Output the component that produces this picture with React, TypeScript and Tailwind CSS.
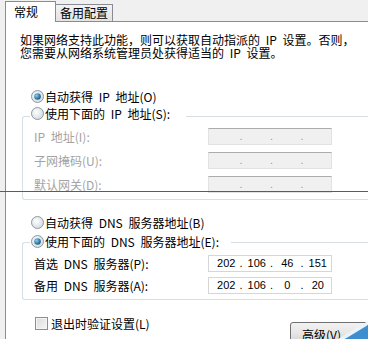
function Radio({ checked, id }: { checked?: boolean; id: string }) {
  return (
    <svg width="13" height="13" viewBox="0 0 13 13" className="shrink-0">
      <defs>
        <radialGradient id={`rf${id}`} cx="0.4" cy="0.4" r="0.7">
          <stop offset="0" stopColor="#ffffff" />
          <stop offset="1" stopColor="#cdd6dd" />
        </radialGradient>
        <radialGradient id={`rd${id}`} cx="0.35" cy="0.35" r="0.75">
          <stop offset="0" stopColor="#7fd0f4" />
          <stop offset="1" stopColor="#0f4b75" />
        </radialGradient>
      </defs>
      <circle cx="6.5" cy="6.5" r="6" fill={`url(#rf${id})`} stroke="#8e99a2" />
      {checked && <circle cx="6.5" cy="6.5" r="3.3" fill={`url(#rd${id})`} />}
    </svg>
  );
}

function IpBox({ values, disabled }: { values: string[]; disabled?: boolean }) {
  return (
    <div
      className={`h-[17px] w-[124px] grid grid-cols-4 border font-['Liberation_Sans',sans-serif] text-[11px] leading-[15px] [word-spacing:0] ${
        disabled ? "bg-[#f0f0f0] border-[#e2e2e2] border-t-[#acacac] text-[#9a9a9a]" : "bg-white border-[#d6d6d6]"
      }`}
    >
      {values.map((v, i) => (
        <div key={i} className="flex items-center">
          <span className="w-[4px]">{i > 0 ? "." : ""}</span>
          <span className="flex-1 text-center">{v}</span>
        </div>
      ))}
    </div>
  );
}

export default function App() {
  return (
    <div className="relative w-[368px] h-[339px] overflow-hidden bg-[#f0f0f0] font-['Noto_Sans_CJK_SC',sans-serif] text-[12px] leading-[13px] text-black [word-spacing:3px]">
      {/* tabs */}
      <div className="flex items-end h-[21px] pl-[5px]">
        <div className="relative z-10 h-[21px] w-[51px] -mb-px border border-b-0 border-[#898c95] bg-white pl-[8px] pt-[3px]">
          常规
        </div>
        <div className="h-[17px] w-[57px] border border-b-0 border-l-0 border-[#898c95] bg-gradient-to-b from-[#f3f3f3] to-[#e3e3e3] pl-[4px] pt-[1px]">
          备用配置
        </div>
      </div>

      {/* page */}
      <div className="ml-[5px] h-[318px] border-l border-t border-[#898c95] bg-white">
        <p className="pl-[14px] pt-[11px]">
          如果网络支持此功能，则可以获取自动指派的 IP 设置。否则，
          <br />
          您需要从网络系统管理员处获得适当的 IP 设置。
        </p>

        <div className="pl-[16px]">
          <div className="mt-[30px] ml-[9px] h-[14px] flex items-center gap-[1px]">
            <Radio id="a" checked />
            <span>自动获得 IP 地址(O)</span>
          </div>

          <div className="relative z-10 mt-[3px] ml-[8px] w-fit h-[14px] flex items-center gap-[1px] bg-white pl-[1px] pr-[16px]">
            <Radio id="b" />
            <span>使用下面的 IP 地址(S):</span>
          </div>
          <div className="-mt-[4px] border border-r-0 border-[#d5dfe5] rounded-l-[3px] pt-[11px] pb-[6px] pl-[11px] flex flex-col gap-[7px] text-[#a3a3a3]">
            <div className="flex items-center">
              <span className="w-[174px]">IP 地址(I):</span>
              <IpBox values={["", "", "", ""]} disabled />
            </div>
            <div className="flex items-center">
              <span className="w-[174px]">子网掩码(U):</span>
              <IpBox values={["", "", "", ""]} disabled />
            </div>
            <div className="flex items-center">
              <span className="w-[174px]">默认网关(D):</span>
              <IpBox values={["", "", "", ""]} disabled />
            </div>
          </div>

          <div className="mt-[15px] ml-[9px] h-[14px] flex items-center gap-[1px]">
            <Radio id="c" />
            <span>自动获得 DNS 服务器地址(B)</span>
          </div>

          <div className="relative z-10 mt-[5px] ml-[8px] w-fit h-[14px] flex items-center gap-[1px] bg-white pl-[1px] pr-[12px]">
            <Radio id="d" checked />
            <span>使用下面的 DNS 服务器地址(E):</span>
          </div>
          <div className="-mt-[6px] border border-r-0 border-[#d5dfe5] rounded-l-[3px] pt-[12px] pb-[5px] pl-[11px] flex flex-col gap-[5px]">
            <div className="flex items-center">
              <span className="w-[174px]">首选 DNS 服务器(P):</span>
              <IpBox values={["202", "106", "46", "151"]} />
            </div>
            <div className="flex items-center">
              <span className="w-[174px]">备用 DNS 服务器(A):</span>
              <IpBox values={["202", "106", "0", "20"]} />
            </div>
          </div>

          <div className="mt-[16px] flex items-start">
            <div className="ml-[13px] mt-[1px] flex items-center gap-[3px]">
              <span className="w-[13px] h-[13px] border border-[#8f8f8f] bg-gradient-to-br from-[#dcdcdc] to-[#f6f6f6] shadow-[inset_0_0_0_1px_#f4f4f4]" />
              <span>退出时验证设置(L)</span>
            </div>
            <button className="ml-auto mt-[6px] h-[23px] w-[78px] rounded-[3px] border border-[#707070] bg-gradient-to-b from-[#f2f2f2] via-[#e6e6e6] to-[#cfcfcf] pl-[11px] text-left text-[12px] leading-[13px] pt-[2px] [word-spacing:0]">
              高级(V)...
            </button>
          </div>
        </div>
      </div>

      {/* annotation line */}
      <div className="absolute left-0 top-[191px] h-px w-full bg-[#d02a2a]" />

      {/* corner of another window */}
      <svg className="absolute right-0 bottom-0" width="30" height="20" viewBox="0 0 30 20">
        <polygon points="0,20 30,2 30,6 7,20" fill="#e8f3fb" />
        <polygon points="7,20 30,6 30,20" fill="#3d8ed0" />
      </svg>
    </div>
  );
}
